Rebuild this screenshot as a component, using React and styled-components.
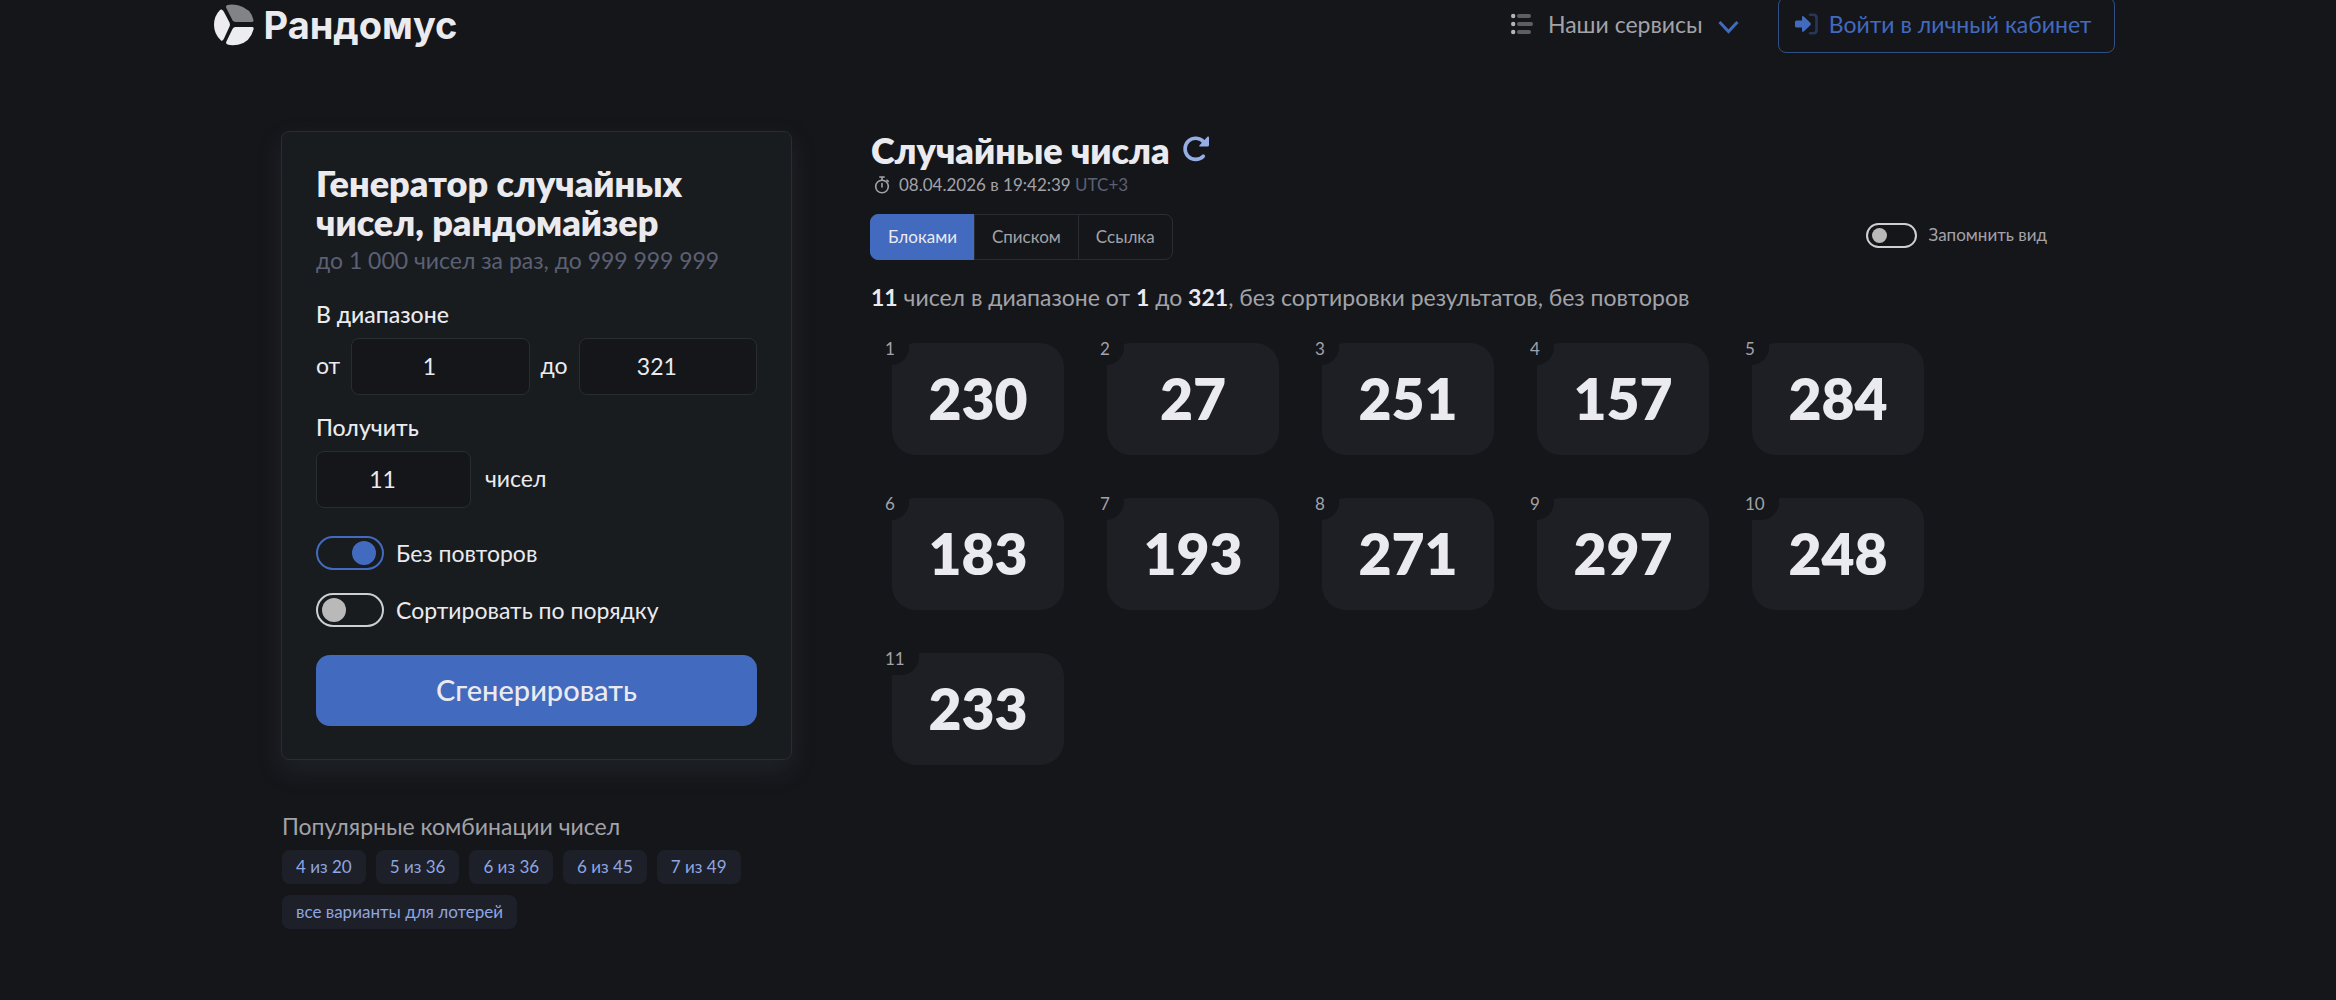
import { useState } from "react";
import styled, { createGlobalStyle, ThemeProvider } from "styled-components";

const theme = {
  bg: "#15161a",
  card: "#181c1f",
  tile: "#1e1f24",
  chip: "#1d2029",
  border: "#292d31",
  primary: "#426abf",
  link: "#8fa6e0",
  text: "#ebebef",
  soft: "#a2a3a9",
  muted: "#5c6074",
};

const numbers = [230, 27, 251, 157, 284, 183, 193, 271, 297, 248, 233];
const combinations = ["4 из 20", "5 из 36", "6 из 36", "6 из 45", "7 из 49", "все варианты для лотерей"];
const views = ["Блоками", "Списком", "Ссылка"];

function LogoMark() {
  return (
    <svg width="40" height="42" viewBox="0 0 40 42" aria-hidden="true">
      <path d="M7.500 5.600Q9 6.500 10 8L15.500 18.500Q16.300 20.500 15.500 22.500L10 34.500Q8.500 37.500 7 36.500Q0 30 0 21Q0 12 6 6Q6.800 5.200 7.500 5.600Z" fill="#ededf1" />
      <path d="M13.500 1Q18 0 24 1.300Q37 4.500 39.500 16Q39.600 18 38 18H21.500Q19.500 18 18.500 16.300L12.300 4Q11.300 1.700 13.500 1Z" fill="#828387" />
      <path d="M21.500 23H38Q40.200 23 39.500 25.500Q36 38.500 24 40.700Q18 41.600 13.500 40.600Q11.500 39.500 12.400 37.500L18.500 25Q19.500 23 21.500 23Z" fill="#ededf1" />
    </svg>
  );
}

function ServicesIcon() {
  return (
    <svg width="22" height="22" viewBox="0 0 22 22" aria-hidden="true">
      <g fill="#b5b5b8">
        <circle cx="2.200" cy="3" r="2.200" />
        <circle cx="2.200" cy="11" r="2.200" />
        <circle cx="2.200" cy="19" r="2.200" />
      </g>
      <g fill="#5e5f63">
        <rect x="6" y="1" width="14" height="4" rx="2" />
        <rect x="6" y="9" width="16" height="4" rx="2" />
        <rect x="6" y="17" width="14" height="4" rx="2" />
      </g>
    </svg>
  );
}

function ChevronIcon() {
  return (
    <svg width="22" height="22" viewBox="0 0 22 22" fill="none" aria-hidden="true">
      <path d="M1.500 9L10.500 18.500L19.500 9" stroke="#426abf" strokeWidth="3" />
    </svg>
  );
}

function LoginIcon() {
  return (
    <svg width="24" height="22" viewBox="0 0 24 22" aria-hidden="true">
      <path d="M1.500 7.500H7V4.500Q7 2.300 8.800 3.600L15.300 9.700Q16.600 11 15.300 12.300L8.800 18.400Q7 19.700 7 17.500V14.500H1.500Q0 14.500 0 13V9Q0 7.500 1.500 7.500Z" fill="#426abf" />
      <path d="M15 1.800H18.500Q21.500 1.800 21.500 5V17Q21.500 20.200 18.500 20.200H15" fill="none" stroke="#28365a" strokeWidth="2.600" strokeLinecap="round" />
    </svg>
  );
}

function RefreshIcon() {
  return (
    <svg width="28" height="28" viewBox="0 0 28 28" aria-hidden="true">
      <path d="M21.300 21.200A10.600 10.600 0 1 1 21.800 7" fill="none" stroke="#96ade6" strokeWidth="3.600" strokeLinecap="round" />
      <path d="M25.700 1.500Q27 1 27 2.500V10Q27 11.500 25.500 11.500H18Q16.500 11.500 17.500 10.200Z" fill="#96ade6" />
    </svg>
  );
}

function StopwatchIcon() {
  return (
    <svg width="16" height="18" viewBox="0 0 16 18" fill="none" stroke="#a2a3a9" strokeWidth="1.600" strokeLinecap="round" aria-hidden="true">
      <circle cx="8" cy="10.500" r="6.300" />
      <path d="M5.800 1H10.200M8 1V4M13 4.200L14.200 5.400M8 7.500V11" />
    </svg>
  );
}

export default function App() {
  const [from, setFrom] = useState(1);
  const [to, setTo] = useState(321);
  const [count, setCount] = useState(11);
  const [view, setView] = useState("Блоками");

  return (
    <ThemeProvider theme={theme}>
      <GlobalStyle />
      <Page>
        <Header>
          <Logo href="#">
            <LogoMark />
            <span>Рандомус</span>
          </Logo>
          <Nav>
            <ServicesButton type="button">
              <ServicesIcon />
              <span>Наши сервисы</span>
              <ChevronIcon />
            </ServicesButton>
            <LoginLink href="#">
              <LoginIcon />
              <span>Войти в личный кабинет</span>
            </LoginLink>
          </Nav>
        </Header>

        <Main>
          <aside>
            <Card onSubmit={(e) => e.preventDefault()}>
              <Title>Генератор случайных чисел, рандомайзер</Title>
              <Subtitle>до 1&#8239;000 чисел за раз, до 999&#8239;999&#8239;999</Subtitle>

              <Legend>В диапазоне</Legend>
              <Range>
                <label htmlFor="from">от</label>
                <NumberInput id="from" type="number" value={from} onChange={(e) => setFrom(e.target.value)} />
                <label htmlFor="to">до</label>
                <NumberInput id="to" type="number" value={to} onChange={(e) => setTo(e.target.value)} />
              </Range>

              <Legend as="label" htmlFor="count">Получить</Legend>
              <Amount>
                <NumberInput id="count" type="number" value={count} onChange={(e) => setCount(e.target.value)} />
                <span>чисел</span>
              </Amount>

              <Switches>
                <SwitchLabel>
                  <Switch type="checkbox" defaultChecked />
                  Без повторов
                </SwitchLabel>
                <SwitchLabel>
                  <Switch type="checkbox" />
                  Сортировать по порядку
                </SwitchLabel>
              </Switches>

              <Submit type="submit">Сгенерировать</Submit>
            </Card>

            <PopularTitle>Популярные комбинации чисел</PopularTitle>
            <Chips>
              {combinations.map((item) => (
                <Chip key={item} href="#">{item}</Chip>
              ))}
            </Chips>
          </aside>

          <section>
            <ResultHead>
              <ResultTitle>Случайные числа</ResultTitle>
              <IconButton type="button" aria-label="Обновить">
                <RefreshIcon />
              </IconButton>
            </ResultHead>
            <Time>
              <StopwatchIcon />
              <span>08.04.2026 в 19:42:39 <small>UTC+3</small></span>
            </Time>

            <Toolbar>
              <Tabs>
                {views.map((item) => (
                  <Tab key={item} type="button" $active={view === item} onClick={() => setView(item)}>
                    {item}
                  </Tab>
                ))}
              </Tabs>
              <SwitchLabel $small>
                <Switch type="checkbox" $small />
                Запомнить вид
              </SwitchLabel>
            </Toolbar>

            <Summary>
              <b>11</b> чисел в диапазоне от <b>1</b> до <b>321</b>, без сортировки результатов, без повторов
            </Summary>

            <Tiles>
              {numbers.map((number, i) => (
                <Tile key={number}>
                  <TileIndex>{i + 1}</TileIndex>
                  {number}
                </Tile>
              ))}
            </Tiles>
          </section>
        </Main>
      </Page>
    </ThemeProvider>
  );
}

const GlobalStyle = createGlobalStyle`
  * {
    box-sizing: border-box;
  }
  body {
    margin: 0;
    background: ${(props) => props.theme.bg};
    color: ${(props) => props.theme.text};
    font-family: Lato, "Noto Sans", sans-serif;
    font-size: 23px;
    line-height: 30px;
  }
  h1, h2, p, ol {
    margin: 0;
    padding: 0;
  }
  button, input {
    font: inherit;
    color: inherit;
  }
  button {
    cursor: pointer;
  }
  a {
    text-decoration: none;
  }
  svg {
    flex: none;
    display: block;
  }
`;

const Page = styled.div`
  min-height: 100vh;
  padding: 0 32px 48px 24px;
`;

const Header = styled.header`
  display: flex;
  justify-content: space-between;
  max-width: 1901px;
  margin: -3px auto 0;
`;

const Logo = styled.a`
  display: flex;
  align-items: center;
  gap: 10px;
  color: ${(props) => props.theme.text};
  font-family: Inter, "Noto Sans", sans-serif;
  font-size: 38px;
  font-weight: 700;
`;

const Nav = styled.nav`
  display: flex;
  align-items: center;
  gap: 38px;
`;

const ServicesButton = styled.button`
  display: flex;
  align-items: center;
  gap: 15px;
  padding: 0 0 2px;
  border: 0;
  background: none;
  color: ${(props) => props.theme.soft};
`;

const LoginLink = styled.a`
  display: flex;
  align-items: center;
  gap: 10px;
  padding: 11px 22px 13px 16px;
  border: 1px solid #304f86;
  border-radius: 8px;
  color: ${(props) => props.theme.primary};
`;

const Main = styled.main`
  display: grid;
  grid-template-columns: minmax(0, 511px) minmax(0, 1fr);
  gap: 79px;
  max-width: 1766px;
  margin: 78px auto 0;
`;

const Card = styled.form`
  padding: 32px 34px 33px;
  border: 1px solid ${(props) => props.theme.border};
  border-radius: 8px;
  background: ${(props) => props.theme.card};
  box-shadow: 0 10px 24px rgba(70, 80, 90, 0.22);
`;

const Title = styled.h1`
  font-size: 36px;
  line-height: 39px;
  font-weight: 800;
`;

const Subtitle = styled.p`
  margin: 3px 0 24px;
  color: ${(props) => props.theme.muted};
`;

const Legend = styled.div`
  display: block;
  margin-bottom: 9px;
  font-weight: 500;
`;

const NumberInput = styled.input`
  flex: 1;
  min-width: 0;
  height: 57px;
  padding: 0 32px 2px 10px;
  border: 1px solid ${(props) => props.theme.border};
  border-radius: 8px;
  background: ${(props) => props.theme.bg};
  text-align: center;
  appearance: textfield;

  &::-webkit-inner-spin-button {
    appearance: none;
    margin: 0;
  }
`;

const Range = styled.div`
  display: flex;
  align-items: center;
  gap: 11px;
  margin-bottom: 17px;

  label, span {
    padding-bottom: 3px;
  }
`;

const Amount = styled(Range)`
  gap: 14px;
  margin-bottom: 28px;

  ${NumberInput} {
    flex: 0 0 155px;
  }
`;

const Switches = styled.div`
  display: grid;
  gap: 23px;
  margin-bottom: 28px;
`;

const SwitchLabel = styled.label`
  display: flex;
  align-items: center;
  gap: 12px;
  line-height: 34px;
  ${(props) => props.$small && `
    font-size: 17px;
    line-height: 30px;
    color: ${props.theme.soft};
  `}
`;

const Switch = styled.input`
  appearance: none;
  display: flex;
  align-items: center;
  width: ${(props) => (props.$small ? 51 : 68)}px;
  height: ${(props) => (props.$small ? 25 : 34)}px;
  margin: 0;
  padding: 0 ${(props) => (props.$small ? 4 : 6)}px 0 4px;
  border: 2px solid #cfcfd1;
  border-radius: 17px;

  &::before {
    content: "";
    width: ${(props) => (props.$small ? 15 : 24)}px;
    height: ${(props) => (props.$small ? 15 : 24)}px;
    border-radius: 50%;
    background: #b9b9ba;
  }
  &:checked {
    justify-content: flex-end;
    border-color: ${(props) => props.theme.primary};
  }
  &:checked::before {
    background: ${(props) => props.theme.primary};
  }
`;

const Submit = styled.button`
  width: 100%;
  padding: 17px 18px 19px;
  border: 0;
  border-radius: 14px;
  background: ${(props) => props.theme.primary};
  font-size: 29px;
  line-height: 35px;
  font-weight: 500;
`;

const PopularTitle = styled.p`
  margin: 51px 0 9px 1px;
  color: ${(props) => props.theme.soft};
`;

const Chips = styled.div`
  display: flex;
  flex-wrap: wrap;
  gap: 11px 10px;
  margin: 0 40px 0 1px;
`;

const Chip = styled.a`
  padding: 0 14px;
  border-radius: 8px;
  background: ${(props) => props.theme.chip};
  color: ${(props) => props.theme.link};
  font-size: 17px;
  line-height: 34px;
`;

const ResultHead = styled.div`
  display: flex;
  align-items: center;
  gap: 12px;
`;

const ResultTitle = styled.h2`
  font-size: 36px;
  line-height: 39px;
  font-weight: 800;
`;

const IconButton = styled.button`
  padding: 0 0 4px;
  border: 0;
  background: none;
`;

const Time = styled.p`
  display: flex;
  align-items: center;
  gap: 9px;
  margin: 2px 0 16px 3px;
  color: ${(props) => props.theme.soft};
  font-size: 17px;
  line-height: 26px;

  small {
    font-size: 17px;
    color: ${(props) => props.theme.muted};
  }
`;

const Toolbar = styled.div`
  display: flex;
  justify-content: space-between;
  align-items: flex-start;

  > label {
    padding-top: 6px;
  }
`;

const Tabs = styled.div`
  display: flex;
`;

const Tab = styled.button`
  padding: 5px 17px;
  margin-left: -1px;
  border: 1px solid ${(props) => (props.$active ? props.theme.primary : props.theme.border)};
  background: ${(props) => (props.$active ? props.theme.primary : "none")};
  color: ${(props) => (props.$active ? props.theme.text : props.theme.soft)};
  font-size: 17px;
  line-height: 34px;

  &:first-child {
    border-radius: 8px 0 0 8px;
  }
  &:last-child {
    border-radius: 0 8px 8px 0;
  }
`;

const Summary = styled.p`
  margin: 22px 0 31px;
  color: ${(props) => props.theme.soft};

  b {
    color: ${(props) => props.theme.text};
  }
`;

const Tiles = styled.ol`
  display: flex;
  flex-wrap: wrap;
  gap: 43px;
  padding-left: 21px;
  list-style: none;
`;

const Tile = styled.li`
  position: relative;
  min-width: 172px;
  padding: 20px 24px 22px;
  border-radius: 24px;
  background: ${(props) => props.theme.tile};
  font-size: 57px;
  line-height: 70px;
  font-weight: 800;
  text-align: center;
`;

const TileIndex = styled.span`
  position: absolute;
  top: -6px;
  left: -13px;
  padding: 0 14px 4px 6px;
  border-radius: 0 0 18px 0;
  background: ${(props) => props.theme.bg};
  color: ${(props) => props.theme.soft};
  font-size: 17px;
  line-height: 24px;
  font-weight: 400;
`;
